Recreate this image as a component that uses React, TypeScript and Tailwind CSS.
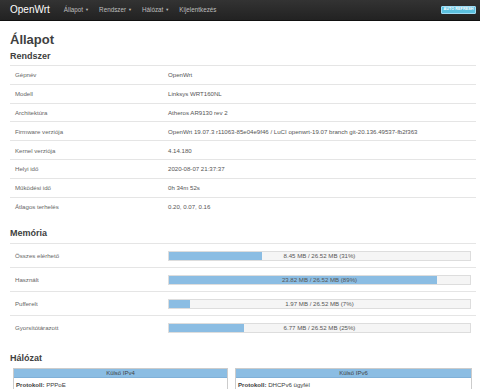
const SYSTEM = [
  ['Gépnév', 'OpenWrt'],
  ['Modell', 'Linksys WRT160NL'],
  ['Architektúra', 'Atheros AR9130 rev 2'],
  ['Firmware verziója', 'OpenWrt 19.07.3 r11063-85e04e9f46 / LuCI openwrt-19.07 branch git-20.136.49537-fb2f363'],
  ['Kernel verziója', '4.14.180'],
  ['Helyi idő', '2020-08-07 21:37:37'],
  ['Működési idő', '0h 34m 52s'],
  ['Átlagos terhelés', '0.20, 0.07, 0.16'],
]

const MEMORY = [
  { label: 'Összes elérhető', value: '8.45 MB / 26.52 MB (31%)', pct: 31 },
  { label: 'Használt', value: '23.82 MB / 26.52 MB (89%)', pct: 89 },
  { label: 'Pufferelt', value: '1.97 MB / 26.52 MB (7%)', pct: 7 },
  { label: 'Gyorsítótárazott', value: '6.77 MB / 26.52 MB (25%)', pct: 25 },
]

const MENU = ['Állapot', 'Rendszer', 'Hálózat']

export default function App() {
  return (
    <div className="min-h-[389px] bg-white text-[#404040]" style={{ fontFamily: '"Liberation Sans", Arial, sans-serif' }}>
      <nav className="flex h-[21px] items-center border-b border-[#111] bg-gradient-to-b from-[#333] to-[#222] pl-[10px] pr-[4px]">
        <span className="mr-[14px] text-[10px] leading-none text-white">OpenWrt</span>
        <div className="flex items-center gap-[10px] text-[6.3px] text-[#bfbfbf]">
          {MENU.map(item => (
            <span key={item} className="flex items-center gap-[2px]">
              {item}
              <span className="text-[4px]">▼</span>
            </span>
          ))}
          <span>Kijelentkezés</span>
        </div>
        <span className="ml-auto flex h-[8px] w-[35px] items-center justify-center rounded-[1px] border border-[#9fdcf5] bg-[#5bc0de] text-[3.8px] font-bold uppercase leading-none text-white">
          Auto Refresh
        </span>
      </nav>

      <main className="pl-[10px] pr-[4px]">
        <h2 className="mt-[11px] text-[13px] font-bold leading-[16px]">Állapot</h2>

        <h3 className="mt-[2px] text-[9px] font-bold leading-[12px]">Rendszer</h3>
        <div className="mt-[3px]">
          {SYSTEM.map(([label, value]) => (
            <div key={label} className="flex h-[18.8px] items-center border-t border-[#e5e5e5] text-[6.1px]">
              <span className="w-[158px] shrink-0 pl-[5px] text-[#666]">{label}</span>
              <span className="text-[#555]">{value}</span>
            </div>
          ))}
        </div>

        <h3 className="mt-[12px] text-[9px] font-bold leading-[12px]">Memória</h3>
        <div className="mt-[4px]">
          {MEMORY.map(row => (
            <div key={row.label} className="flex h-[24px] items-center border-t border-[#e5e5e5] text-[6.1px]">
              <span className="w-[158px] shrink-0 pl-[5px] text-[#666]">{row.label}</span>
              <div className="relative mr-[5px] h-[10px] flex-1 border border-[#ddd] bg-[#f5f5f5]">
                <div className="absolute inset-y-0 left-0 bg-[#8bbde3]" style={{ width: `${row.pct}%` }} />
                <span className="relative flex h-full items-center justify-center text-[#555]">{row.value}</span>
              </div>
            </div>
          ))}
        </div>

        <h3 className="mt-[13px] text-[9px] font-bold leading-[12px]">Hálózat</h3>
        <div className="mt-[4px] flex gap-[7px] pl-[3px]">
          <NetBox title="Külső IPv4" proto="PPPoE" width="w-[215px]" />
          <NetBox title="Külső IPv6" proto="DHCPv6 ügyfél" width="w-[237px]" />
        </div>
      </main>
    </div>
  )
}

function NetBox({ title, proto, width }: { title: string; proto: string; width: string }) {
  return (
    <div className={`${width} border border-[#ccc]`}>
      <div className="flex h-[9px] items-center justify-center border-b border-[#7fb0d8] bg-[#8bbde3] text-[6px] text-[#444]">
        {title}
      </div>
      <div className="px-[2px] py-[2px] text-[6.1px] text-[#404040]">
        <span className="font-bold">Protokoll:</span> {proto}
      </div>
    </div>
  )
}
